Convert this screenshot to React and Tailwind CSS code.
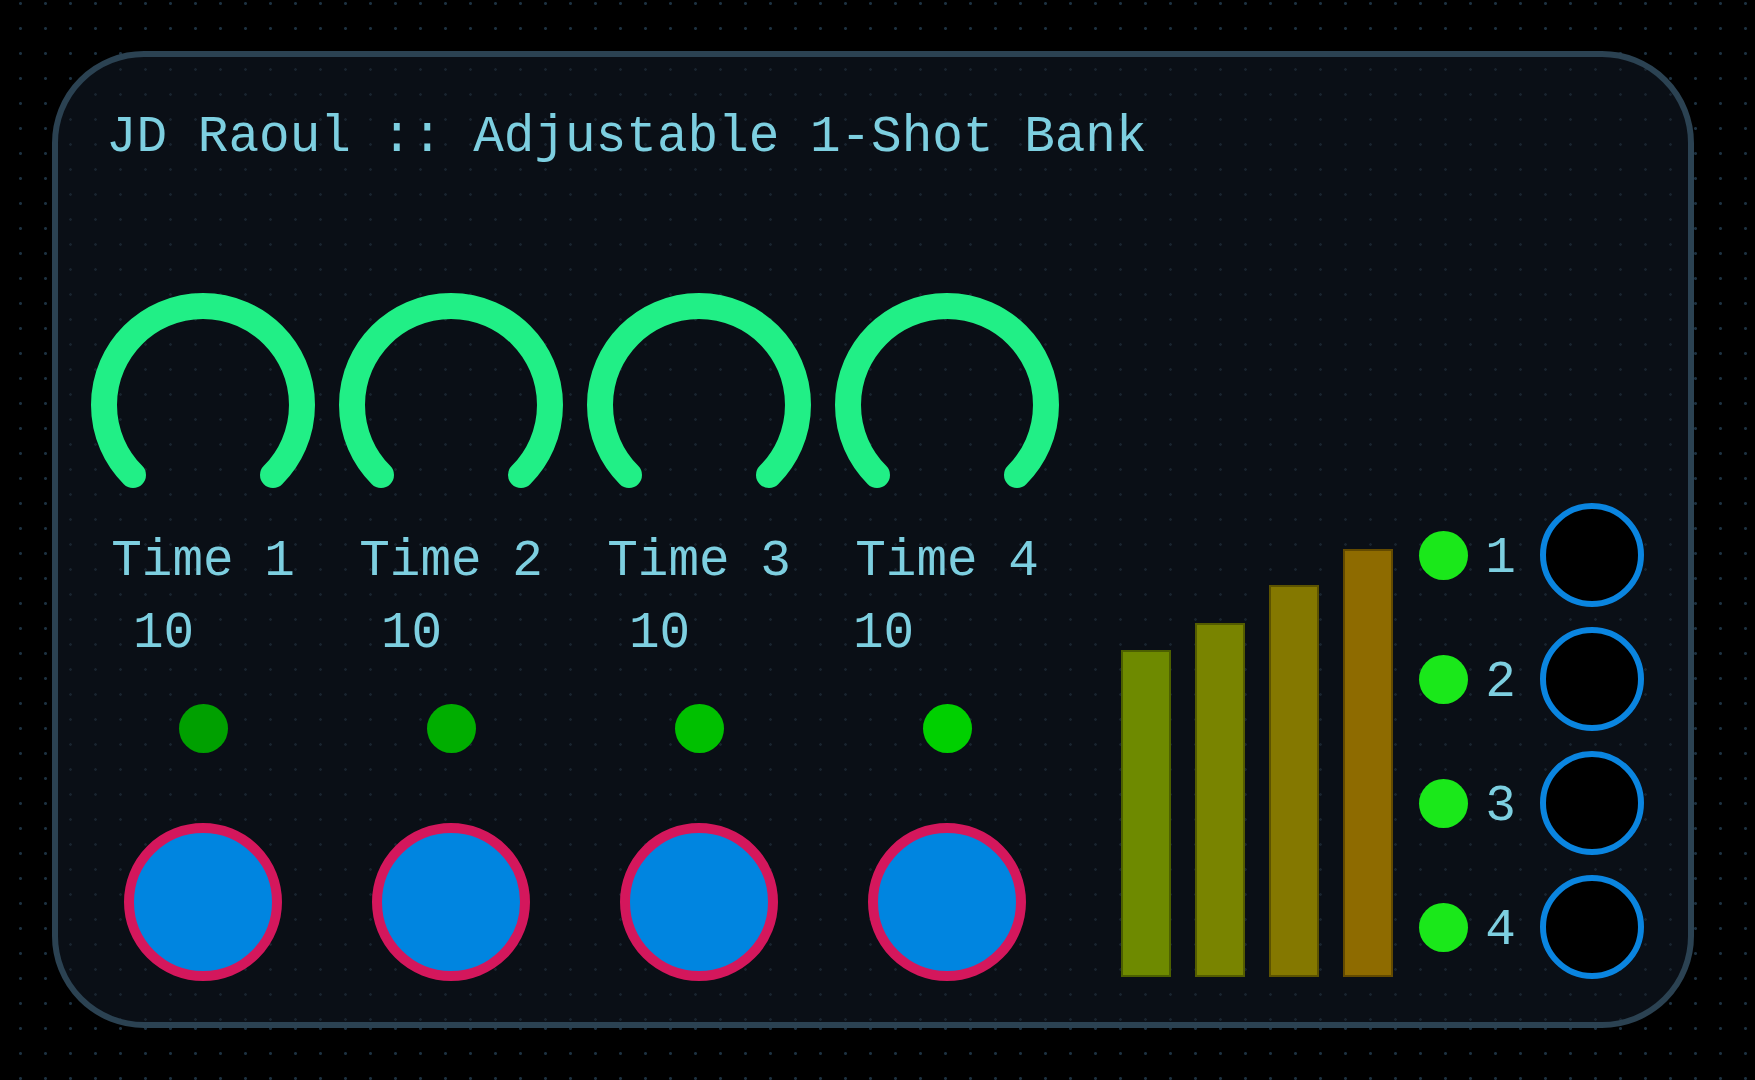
import React from "react";

const knobs = [
  { label: "Time 1", value: "10", led: "bg-[#00a000]", valuePad: "pl-[54px]" },
  { label: "Time 2", value: "10", led: "bg-[#00ae00]", valuePad: "pl-[54px]" },
  { label: "Time 3", value: "10", led: "bg-[#00c000]", valuePad: "pl-[54px]" },
  { label: "Time 4", value: "10", led: "bg-[#00d000]", valuePad: "pl-[30px]" },
];

const bars = [
  { h: "h-[327px]", color: "bg-[#6e8a00]" },
  { h: "h-[354px]", color: "bg-[#798400]" },
  { h: "h-[392px]", color: "bg-[#847800]" },
  { h: "h-[428px]", color: "bg-[#8e6b00]" },
];

const Knob = () => (
  <svg width="248" height="210" viewBox="0 0 248 210">
    <path
      d="M 54 182 A 99 99 0 1 1 194 182"
      fill="none"
      stroke="#21ef86"
      strokeWidth="26"
      strokeLinecap="round"
    />
  </svg>
);

const KnobColumn = ({ label, value, led, valuePad }) => (
  <div className="w-[248px] flex flex-col">
    <Knob />

    <div className="mt-[33px] h-[51px] leading-none text-center whitespace-pre">
      {label}
    </div>

    <div className={`mt-[21px] h-[51px] leading-none ${valuePad}`}>
      {value}
    </div>

    <div className="mt-[45px] flex justify-center">
      <div className={`w-[49px] h-[49px] rounded-full ${led}`} />
    </div>

    <div className="mt-[70px] flex justify-center">
      <div className="w-[158px] h-[158px] rounded-full border-[10px] border-[#d4175c] bg-[#0085e0]" />
    </div>
  </div>
);

const OutputRow = ({ n }) => (
  <div className="flex items-center h-[104px]">
    <div className="w-[49px] h-[49px] rounded-full bg-[#1ae81a]" />

    <div className="ml-[17px] w-[31px] pt-[6px] leading-none text-center">
      {n}
    </div>

    <div className="ml-[24px] w-[104px] h-[104px] rounded-full border-[6px] border-[#0a85e0] bg-black" />
  </div>
);

export default function App() {
  return (
    <div className="min-h-screen w-full bg-black bg-[radial-gradient(circle,#1c3141_1.2px,transparent_1.7px)] bg-[length:25px_25px] bg-[position:8px_-9px] pt-[51px] pl-[52px] font-['Liberation_Mono',monospace] text-[51px] text-[#7dcfe0]">
      <div className="w-[1642px] h-[977px] rounded-[92px] border-[6px] border-[#2b4252] bg-[#0a0f16] bg-[radial-gradient(circle,#18232e_1px,transparent_1.6px)] bg-[length:25px_25px]">
        <div className="pt-[55px] pl-[48px] h-[106px] leading-none whitespace-pre">
          JD Raoul :: Adjustable 1-Shot Bank
        </div>

        <div className="mt-[130px] flex items-end">
          <div className="ml-[21px] flex">
            {knobs.map((k) => (
              <KnobColumn key={k.label} {...k} />
            ))}
          </div>

          <div className="ml-[50px] mb-[4px] flex items-end gap-[24px]">
            {bars.map((b, i) => (
              <div
                key={i}
                className={`w-[50px] ${b.h} ${b.color} border-2 border-black/30`}
              />
            ))}
          </div>

          <div className="ml-[26px] mb-[2px] flex flex-col gap-[20px]">
            {[1, 2, 3, 4].map((n) => (
              <OutputRow key={n} n={n} />
            ))}
          </div>
        </div>
      </div>
    </div>
  );
}
